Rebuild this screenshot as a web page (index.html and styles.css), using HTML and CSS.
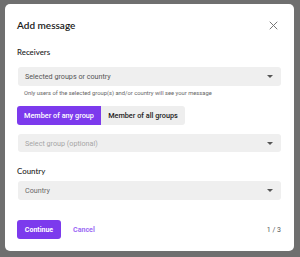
FILE: index.html
```html
<!DOCTYPE html>
<html lang="en">
<head>
  <meta charset="UTF-8" />
  <meta name="viewport" content="width=device-width, initial-scale=1.0" />
  <title>Add message</title>
  <link rel="stylesheet" href="styles.css">
</head>
<body>
  <div class="modal">
    <div class="modal-header">
      <h1>Add message</h1>
      <button class="close" aria-label="Close">
        <svg width="9" height="9" viewBox="0 0 9 9"><path d="M1 1 L8 8 M8 1 L1 8" stroke="#777" stroke-width="1" stroke-linecap="round"/></svg>
      </button>
    </div>

    <div class="label first">Receivers</div>
    <div class="select">
      <span>Selected groups or country</span>
      <span class="caret"></span>
    </div>
    <div class="hint">Only users of the selected group(s) and/or country will see your message</div>

    <div class="toggle">
      <button class="active">Member of any group</button>
      <button>Member of all groups</button>
    </div>

    <div class="select muted group-select">
      <span>Select group (optional)</span>
      <span class="caret"></span>
    </div>

    <div class="label country">Country</div>
    <div class="select country-select">
      <span>Country</span>
      <span class="caret"></span>
    </div>

    <div class="footer">
      <button class="continue">Continue</button>
      <button class="cancel">Cancel</button>
      <span class="step">1 / 3</span>
    </div>
  </div>
</body>
</html>
```

FILE: styles.css
```css
html, body {
  margin: 0;
  padding: 0;
  height: 100%;
  overflow: hidden;
  background: #6f6f6f;
  font-family: Roboto, 'Noto Sans', sans-serif;
}
.modal {
  box-sizing: border-box;
  width: 289px;
  height: 247px;
  margin: 4px 0 0 5px;
  padding: 0 12px 12px 12px;
  background: #fff;
  border-radius: 5px;
  display: flex;
  flex-direction: column;
}
.modal-header {
  display: flex;
  align-items: center;
  justify-content: space-between;
  padding-top: 10px;
  height: 22px;
}
.modal-header h1 {
  margin: 0;
  font-family: Lato, Roboto, sans-serif;
  font-size: 10px;
  font-weight: 600;
  color: #1a1a1a;
}
.close {
  border: none;
  background: none;
  padding: 0;
  margin-right: 4px;
  display: flex;
}
.label {
  font-family: Lato, Roboto, sans-serif;
  font-size: 7.9px;
  font-weight: 500;
  line-height: 14px;
  color: #222;
}
.label.first {
  margin-top: 9px;
}
.label.country {
  margin-top: 12px;
}
.select {
  box-sizing: border-box;
  margin: 8px 1px 0 1px;
  height: 19px;
  padding: 0 8px 0 7px;
  background: #efefef;
  border-radius: 3px;
  display: flex;
  align-items: center;
  justify-content: space-between;
  font-size: 7.2px;
  color: #555;
}
.select.muted {
  color: #a6a6a6;
}
.group-select {
  margin-top: 9px;
  height: 18px;
}
.country-select {
  margin-top: 3px;
  color: #6a6a6a;
}
.caret {
  width: 0;
  height: 0;
  border-left: 3px solid transparent;
  border-right: 3px solid transparent;
  border-top: 3px solid #555;
}
.hint {
  margin: 2px 0 0 7px;
  line-height: 10px;
  font-size: 5.8px;
  color: #666;
}
.toggle {
  margin-top: 8px;
  display: flex;
}
.toggle button {
  width: 84px;
  height: 19px;
  border: none;
  padding: 0;
  white-space: nowrap;
  font-family: inherit;
  font-size: 7.3px;
  font-weight: 500;
  background: #eeeeee;
  color: #222;
  border-radius: 0 3px 3px 0;
}
.toggle button.active {
  background: #7c3aed;
  color: #fff;
  border-radius: 3px 0 0 3px;
}
.footer {
  margin-top: auto;
  display: flex;
  align-items: center;
  height: 19px;
}
.continue {
  width: 44px;
  height: 19px;
  border: none;
  border-radius: 3px;
  background: #7c3aed;
  color: #fff;
  font-family: inherit;
  font-size: 7px;
  font-weight: 700;
  padding: 0;
}
.cancel {
  margin-left: 12px;
  border: none;
  background: none;
  padding: 0;
  color: #9d6cf5;
  font-family: inherit;
  font-size: 7.1px;
  font-weight: 700;
}
.step {
  margin-left: auto;
  margin-right: 1px;
  font-size: 7px;
  color: #555;
}
```
